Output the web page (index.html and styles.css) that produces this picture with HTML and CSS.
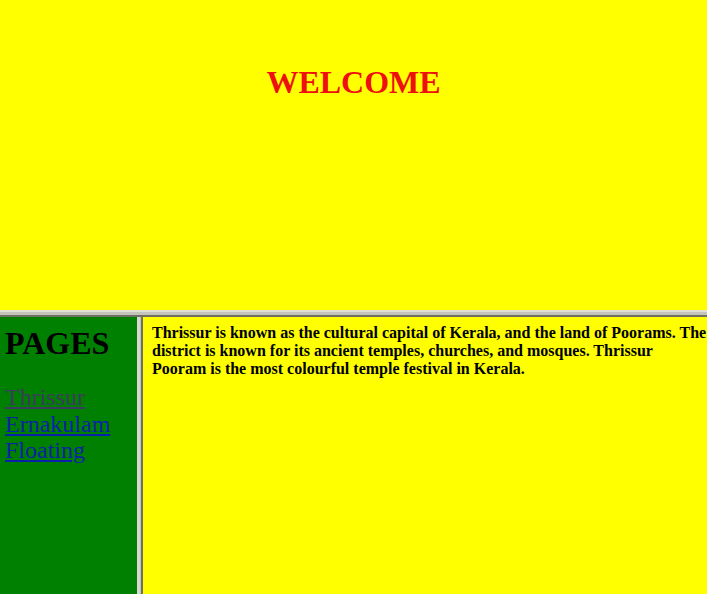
FILE: index.html
```html
<!DOCTYPE html>
<html>
<head>
<meta charset="utf-8">
<title>Welcome</title>
<link rel="stylesheet" href="styles.css">
</head>
<body>
<div class="page">
  <header class="top">
    <h1 class="welcome">WELCOME</h1>
  </header>
  <div class="hsplit"></div>
  <div class="bottom">
    <nav class="side">
      <h1 class="pages">PAGES</h1>
      <a class="link visited" href="#">Thrissur</a>
      <a class="link" href="#">Ernakulam</a>
      <a class="link" href="#">Floating</a>
    </nav>
    <div class="vsplit"></div>
    <main class="content">
      <b class="text">Thrissur is known as the cultural capital of Kerala, and the land of Poorams. The district is known for its ancient temples, churches, and mosques. Thrissur Pooram is the most colourful temple festival in Kerala.</b>
    </main>
  </div>
</div>
</body>
</html>
```
FILE: styles.css
```css
html, body {
  margin: 0;
  padding: 0;
  height: 100%;
}
body {
  font-family: "Liberation Serif", "Times New Roman", serif;
  background: #ffff00;
}
.page {
  display: flex;
  flex-direction: column;
  height: 594px;
  overflow: hidden;
}
.top {
  height: 310px;
  flex: none;
  background: #ffff00;
  padding-top: 64px;
  box-sizing: border-box;
}
.welcome {
  margin: 0;
  text-align: center;
  color: #ee0f0f;
  font-size: 32px;
  font-weight: bold;
}
.hsplit {
  flex: none;
  height: 7px;
  background: linear-gradient(to bottom, #e2e2d2 0, #e2e2d2 2px, #c4c4bc 2px, #c4c4bc 5px, #707060 5px, #707060 7px);
}
.bottom {
  flex: 1;
  display: flex;
  min-height: 0;
}
.side {
  width: 137px;
  flex: none;
  background: #008000;
  padding: 8px 0 0 5px;
  box-sizing: border-box;
  display: flex;
  flex-direction: column;
  align-items: flex-start;
}
.pages {
  margin: 0 0 22px 0;
  font-size: 32px;
  font-weight: bold;
  color: #000;
}
.link {
  font-size: 24px;
  line-height: 26.5px;
  color: #0a22a8;
  text-decoration: underline;
}
.link.visited {
  color: #3c3c5e;
}
.vsplit {
  width: 6px;
  flex: none;
  background: linear-gradient(to right, #d8d8d0 0, #d8d8d0 3px, #c0c0b8 3px, #c0c0b8 4px, #707060 4px, #707060 6px);
}
.content {
  flex: 1;
  background: #ffff00;
  padding: 7px 0 0 9px;
}
.text {
  display: block;
  font-size: 16px;
  line-height: 18px;
  color: #000;
}
```
